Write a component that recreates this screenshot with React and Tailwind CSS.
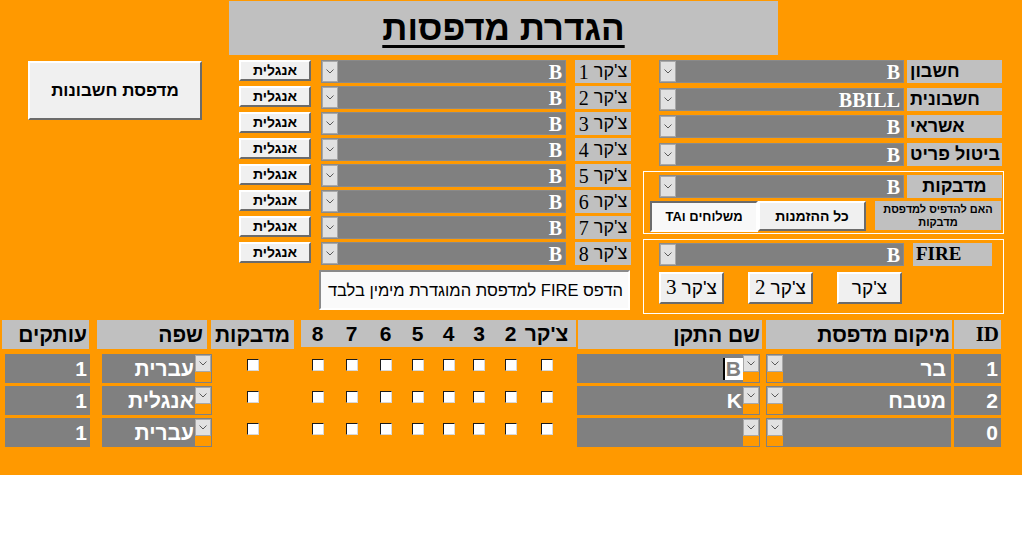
const serif = "font-['Liberation_Serif','Times_New_Roman',serif]";

function Chevron() {
  return (
    <svg width="8" height="5" viewBox="0 0 8 5">
      <path d="M0.5 0.5 L4 4 L7.5 0.5" stroke="#5a5a5a" strokeWidth="1" fill="none" />
    </svg>
  );
}

function DropBtn({ className = "" }) {
  return (
    <div className={`flex items-center justify-center bg-[#e1e1e1] border border-[#a8a8a8] ${className}`}>
      <Chevron />
    </div>
  );
}

// combo used in the upper part of the form: button left, value right
function Combo({ value }) {
  return (
    <div className="flex h-[23px] w-[245px] bg-[#808080] border border-[#8a8a8a]">
      <DropBtn className="w-[16px] h-full" />
      <div className={`flex-1 flex items-center justify-end pr-[3px] text-white font-bold text-[20px] ${serif}`}>
        {value}
      </div>
    </div>
  );
}

function Raised({ className = "", children }) {
  return (
    <div
      dir="rtl"
      className={`flex items-center justify-center bg-[#f0f0f0] border-2 border-t-white border-l-white border-r-[#6b6b6b] border-b-[#6b6b6b] text-black ${className}`}
    >
      {children}
    </div>
  );
}

function Label({ className = "", children }) {
  return (
    <div dir="rtl" className={`flex items-center bg-[#c0c0c0] text-black ${className}`}>
      {children}
    </div>
  );
}

function Checkbox() {
  return (
    <div className="w-[12px] h-[12px] bg-white border border-t-[#1a1a1a] border-l-[#1a1a1a] border-r-[#d8d8d8] border-b-[#d8d8d8]" />
  );
}

const slots = [33, 35, 33, 31, 31, 30, 33, 39];
const slotLabels = ["8", "7", "6", "5", "4", "3", "2", "צ'קר"];

const rows = [
  { copies: "1", lang: "עברית", device: "B", place: "בר", id: "1", caret: true },
  { copies: "1", lang: "אנגלית", device: "K", place: "מטבח", id: "2" },
  { copies: "1", lang: "עברית", device: "", place: "", id: "0" },
];

export default function App() {
  return (
    <div className="w-[1022px] h-[540px] bg-white overflow-hidden font-['Liberation_Sans',Arial,sans-serif]">
      <div className="h-[475px] bg-[#ff9900] pt-px">
        {/* ===== TITLE ===== */}
        <div className="ml-[229px] w-[549px] h-[54px] bg-[#c0c0c0] flex items-center justify-center">
          <h1 dir="rtl" className="text-[35px] leading-[40px] font-bold text-black underline decoration-[3px] underline-offset-[5px]">
            הגדרת מדפסות
          </h1>
        </div>

        <div className="flex mt-[5px]">
          {/* ===== LEFT BUTTON ===== */}
          <div className="ml-[28px] mt-px">
            <Raised className="w-[174px] h-[59px] text-[17px] font-bold">מדפסת חשבונות</Raised>
          </div>

          {/* ===== CHECKER PRINTERS ===== */}
          <div className="ml-[37px] flex flex-col">
            <div className="flex flex-col gap-[3px]">
              {[1, 2, 3, 4, 5, 6, 7, 8].map((n) => (
                <div key={n} className="flex items-start h-[23px]">
                  <Raised className="w-[72px] h-[21px] text-[14px] font-bold">אנגלית</Raised>
                  <div className="ml-[10px]">
                    <Combo value="B" />
                  </div>
                  <Label className="ml-[9px] w-[56px] h-[23px] justify-center text-[18px]">
                    <span>צ'קר</span>
                    <span className={`mr-[5px] text-[20px] ${serif}`}>{n}</span>
                  </Label>
                </div>
              ))}
            </div>
            <div
              dir="rtl"
              className="ml-[80px] mt-[5px] w-[311px] h-[40px] flex items-center px-[5px] bg-[#fafafa] border-2 border-t-[#8a8a8a] border-l-[#8a8a8a] border-r-white border-b-white text-[16.5px] whitespace-nowrap text-black"
            >
              הדפס FIRE למדפסת המוגדרת מימין בלבד
            </div>
          </div>

          {/* ===== RIGHT PANEL ===== */}
          <div className="ml-[12px] w-[361px] flex flex-col">
            {[
              ["חשבון", "B", "mt-0"],
              ["חשבונית", "BBILL", "mt-[5px]"],
              ["אשראי", "B", "mt-[4px]"],
              ["ביטול פריט", "B", "mt-[5px]"],
            ].map(([label, value, mt]) => (
              <div key={label} className={`flex pl-[16px] ${mt}`}>
                <Combo value={value} />
                <Label className="ml-[3px] w-[95px] h-[23px] pl-[3px] justify-end text-[18px] font-bold">
                  {label}
                </Label>
              </div>
            ))}

            <div className="mt-[5px] h-[63px] border border-white pt-[3px]">
              <div className="flex pl-[15px]">
                <Combo value="B" />
                <Label className="ml-[3px] w-[95px] h-[23px] justify-center text-[18px] font-bold">מדבקות</Label>
              </div>
              <div className="flex mt-[3px]">
                <div
                  dir="rtl"
                  className="ml-[6px] w-[108px] h-[31px] flex items-center justify-center bg-[#f8f8f8] border-2 border-t-[#6b6b6b] border-l-[#6b6b6b] border-r-white border-b-white text-[13px] font-bold"
                >
                  משלוחים וTA
                </div>
                <Raised className="w-[108px] h-[30px] text-[14px] font-bold">כל ההזמנות</Raised>
                <Label className="ml-[9px] w-[126px] h-[29px] justify-center text-center text-[11px] font-bold leading-[13px] text-[#111]">
                  האם להדפיס למדפסת מדבקות
                </Label>
              </div>
            </div>

            <div className="mt-[5px] h-[75px] border border-white pt-[3px]">
              <div className="flex pl-[15px]">
                <Combo value="B" />
                <div dir="ltr" className={`ml-[9px] w-[79px] h-[23px] flex items-center pl-[3px] bg-[#c0c0c0] text-[19px] font-bold ${serif}`}>
                  FIRE
                </div>
              </div>
              <div className="flex mt-[6px] pl-[15px]">
                {["3", "2", ""].map((n, i) => (
                  <Raised key={i} className={`w-[65px] h-[32px] text-[19px] ${i > 0 ? "ml-[24px]" : ""}`}>
                    <span>צ'קר</span>
                    {n && <span className={`mr-[5px] text-[21px] ${serif}`}>{n}</span>}
                  </Raised>
                ))}
              </div>
            </div>
          </div>
        </div>

        {/* ===== TABLE HEADER ===== */}
        <div className="flex mt-[6px] h-[29px] text-[21px] font-bold text-black">
          <Label className="ml-[2px] w-[87px] h-[29px] pr-[2px]">עותקים</Label>
          <Label className="ml-[8px] w-[110px] h-[29px] pr-[4px]">שפה</Label>
          <Label className="ml-[4px] w-[83px] h-[29px] justify-center">מדבקות</Label>
          <div dir="ltr" className="ml-[7px] w-[275px] h-[27px] flex bg-[#c0c0c0]">
            {slots.map((w, i) => (
              <div key={i} dir="rtl" className="flex items-center justify-center" style={{ width: w }}>
                {slotLabels[i]}
              </div>
            ))}
          </div>
          <Label className="ml-[2px] w-[184px] h-[29px] pr-[2px]">שם התקן</Label>
          <Label className="ml-[4px] w-[186px] h-[29px] pr-[2px]">מיקום מדפסת</Label>
          <div className={`ml-[2px] w-[47px] h-[29px] flex items-center justify-end pr-[2px] bg-[#c0c0c0] ${serif}`}>ID</div>
        </div>

        {/* ===== TABLE ROWS ===== */}
        <div className="flex flex-col gap-[3px] mt-[5px]">
          {rows.map((r, idx) => (
            <div key={idx} className="flex h-[29px] text-white font-bold text-[21px]">
              <div className="ml-[5px] w-[85px] h-full flex items-center justify-end pr-[3px] bg-[#808080]">{r.copies}</div>

              <div className="ml-[12px] w-[110px] h-full flex border border-[#808080]">
                <div dir="rtl" className="flex-1 flex items-center pr-[1px] bg-[#808080]">{r.lang}</div>
                <div className="w-[16px] flex flex-col">
                  <DropBtn className="h-[17px]" />
                </div>
              </div>

              <div className="w-[82px] flex justify-center pt-[5px]">
                <Checkbox />
              </div>

              <div className="ml-[7px] w-[275px] flex">
                {slots.map((w, i) => (
                  <div key={i} className="flex justify-center pt-[5px]" style={{ width: w }}>
                    <Checkbox />
                  </div>
                ))}
              </div>

              <div className="ml-[1px] w-[183px] h-full flex border border-[#808080]">
                <div className="flex-1 flex items-center justify-end bg-[#808080]">
                  {r.caret ? (
                    <span className="h-[22px] flex items-center bg-white text-[#808080] border-l-2 border-black pr-[2px] pl-px">
                      {r.device}
                    </span>
                  ) : (
                    <span className="pr-[1px]">{r.device}</span>
                  )}
                </div>
                <div className="w-[16px] flex flex-col">
                  <DropBtn className="h-[17px]" />
                </div>
              </div>

              <div className="ml-[6px] w-[185px] h-full flex border border-[#808080]">
                <div className="w-[16px] flex flex-col">
                  <DropBtn className="h-[17px]" />
                </div>
                <div dir="rtl" className="flex-1 flex items-center pr-[4px] bg-[#808080]">{r.place}</div>
              </div>

              <div className="ml-[3px] w-[47px] h-full flex items-center justify-end pr-[3px] bg-[#808080]">{r.id}</div>
            </div>
          ))}
        </div>
      </div>
    </div>
  );
}
